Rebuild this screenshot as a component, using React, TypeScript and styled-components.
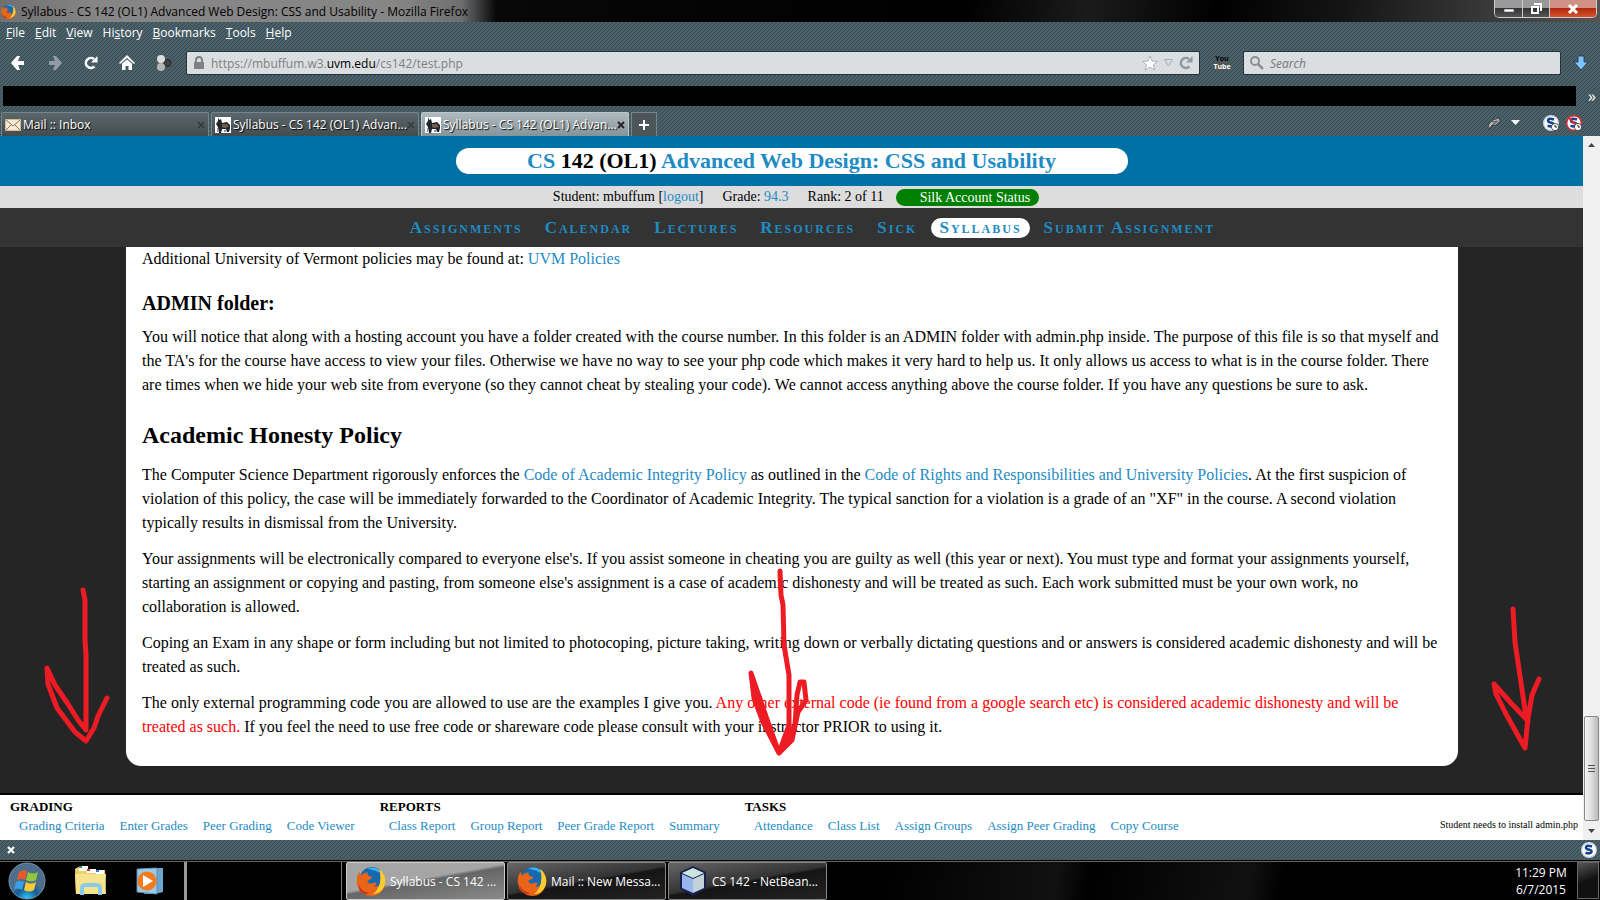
import React from "react";
import styled, { createGlobalStyle } from "styled-components";

const serif = `"Liberation Serif", "Times New Roman", serif`;
const sans = `"Open Sans", "Noto Sans", sans-serif`;
const hatch = `linear-gradient(135deg, #37494f 0 12.5%, #4a6169 12.5% 50%, #37494f 50% 62.5%, #4a6169 62.5%) 0 0 / 4px 4px`;
const paleHatch = `linear-gradient(135deg, #d3d8da 0 12.5%, #dce0e2 12.5% 50%, #d3d8da 50% 62.5%, #dce0e2 62.5%) 0 0 / 4px 4px`;

const Global = createGlobalStyle`
  *{box-sizing:border-box}
  body{margin:0;background:#000}
  button{border:0;padding:0;background:none;color:inherit;font:inherit}
  a{color:#1e8bc3;text-decoration:none}
`;
const Desktop = styled.div`min-height:100vh;display:flex;flex-direction:column;font-family:${sans};font-size:12px;`;

/* window title */
const TitleBar = styled.header`height:22px;display:flex;align-items:center;justify-content:space-between;background:linear-gradient(100deg,#111 0,#050505 40%,#000 60%,#1b1b1b 68%,#000 76%,#151515 84%,#555 100%);overflow:hidden;`;
const WindowTitle = styled.div`display:flex;align-items:center;gap:5px;height:22px;padding:0 28px 0 1px;color:#000;background:linear-gradient(90deg,#707070,#868686 20% 80%,#6f6f6f 93%,transparent);`;
const Caption = styled.div`display:flex;align-self:flex-start;height:18px;margin-right:3px;border:1px solid #ccc;border-top:0;border-radius:0 0 5px 5px;overflow:hidden;`;
const CaptionButton = styled.button<{ $close?: boolean }>`width:${p => (p.$close ? 47 : 27)}px;display:flex;align-items:center;justify-content:center;background:${p => (p.$close ? "linear-gradient(#cf9183 0 45%,#b32b0e 50%,#d4532d)" : "linear-gradient(#999 0 45%,#333 50%,#555)")};& + &{border-left:1px solid #ccc;}`;

/* browser chrome */
const Chrome = styled.div`background:${hatch};color:#fff;`;
const MenuBar = styled.nav`height:20px;display:flex;align-items:center;gap:10px;padding-left:6px;text-shadow:1px 1px 1px #000;`;
const ToolBar = styled.div`height:42px;display:flex;align-items:center;`;
const NavButtons = styled.div`display:flex;width:186px;gap:21px;align-items:center;padding-left:10px;`;
const IconButton = styled.button`display:flex;align-items:center;justify-content:center;`;
const Field = styled.label`height:24px;display:flex;align-items:center;gap:6px;padding:0 6px;background:${paleHatch};border:1px solid #26343a;border-radius:2px;color:#808080;`;
const UrlField = styled(Field)`flex:1;`;
const SearchField = styled(Field)`width:318px;`;
const UrlText = styled.span`flex:1;b{font-weight:400;color:#000}`;
const SearchInput = styled.input`flex:1;min-width:0;border:0;padding:0;background:transparent;font:italic 12px ${sans};outline:0;&::placeholder{color:#777;opacity:1}`;
const ToolbarSlot = styled.div<{ $last?: boolean }>`width:${p => (p.$last ? 39 : 43)}px;display:flex;justify-content:center;`;
const BookmarkRow = styled.div`display:flex;align-items:center;height:24px;padding:0 0 0 3px;`;
const BookmarkStrip = styled.div`flex:1;height:20px;background:#000;`;
const More = styled.button`width:24px;padding-left:8px;line-height:12px;font-size:16px;`;
const TabRow = styled.div`height:28px;display:flex;align-items:flex-end;gap:2px;padding-left:1px;`;
const Tab = styled.button<{ $active?: boolean }>`width:208px;height:24px;display:flex;align-items:center;gap:2px;padding:0 3px;color:#fff;text-shadow:1px 1px 1px #000;border:1px solid ${p => (p.$active ? "#bcc8cc" : "#77868c")};border-bottom:0;border-radius:2px 2px 0 0;background:${p => (p.$active ? "linear-gradient(#aebabf,#84949a)" : "linear-gradient(#5b676c,#434c50)")};svg{flex:none}`;
const TabLabel = styled.span`flex:1;min-width:0;text-align:left;white-space:nowrap;`;
const NewTab = styled.button`width:26px;height:24px;display:flex;align-items:center;justify-content:center;background:#4c555a;border:1px solid #77868c;border-bottom:0;`;
const TabTools = styled.div`margin-left:auto;display:flex;align-items:center;height:26px;gap:7px;padding-right:18px;`;

/* page */
const Viewport = styled.div`flex:1;display:flex;`;
const Page = styled.div`flex:1;min-width:0;display:flex;flex-direction:column;background:#252525;font-family:${serif};font-size:16px;color:#000;`;
const Banner = styled.header`height:50px;display:flex;align-items:center;justify-content:center;background:#0071a4;`;
const CourseTitle = styled.h1`margin:0;width:672px;height:26px;border-radius:13px;background:#fff;text-align:center;font-size:22px;line-height:26px;color:#1e8bc3;b{color:#000}`;
const StatusRow = styled.div`height:22px;display:flex;align-items:center;justify-content:center;gap:19px;background:#ddd;font-size:14px;padding-left:9px;`;
const Silk = styled.span`height:17px;line-height:17px;margin-left:-7px;padding:0 9px 0 24px;border-radius:9px;background:green;color:#fff;`;
const SiteNav = styled.nav`height:39px;display:flex;align-items:center;justify-content:center;gap:6px;padding-left:42px;background:#333;`;
const NavLink = styled.a<{ $current?: boolean }>`height:20px;line-height:20px;padding:0 8px;border-radius:10px;font-size:17px;font-weight:700;font-variant:small-caps;letter-spacing:2px;background:${p => (p.$current ? "#fff" : "transparent")};`;
const Card = styled.main`margin:0 125px 27px 126px;padding:0 16px 15px;background:#fff;border-radius:0 0 15px 15px;`;
const Para = styled.p`margin:0 0 12px;line-height:24px;`;
const SubHeading = styled.h3`margin:20px 0 10px;font-size:20px;line-height:24px;`;
const Heading = styled.h2`margin:22px 0 12px;font-size:24px;line-height:32px;`;
const Warning = styled.span`color:#f00;`;
const Footer = styled.footer`margin-top:auto;height:47px;display:flex;border-top:2px solid #000;background:#fff;padding:0 5px 0 10px;font-size:13px;`;
const FooterGroup = styled.section`margin-right:25px;`;
const FooterTitle = styled.h4`margin:2px 0 0;font-size:13px;line-height:19px;`;
const FooterLinks = styled.div`display:flex;gap:15px;padding-left:9px;line-height:19px;`;
const FooterNote = styled.span`margin-left:auto;align-self:flex-end;padding-bottom:10px;font-size:10px;`;
const Scrollbar = styled.div`width:17px;display:flex;flex-direction:column;align-items:center;background:#f0f0f0;padding:7px 0;`;
const Thumb = styled.div`width:15px;height:105px;margin:auto 0 8px;border:1px solid #888;border-radius:2px;background:linear-gradient(90deg,#f5f5f5,#ddd 50%,#bbb);display:flex;align-items:center;justify-content:center;`;

/* bottom bars */
const AddonBar = styled.div`height:20px;display:flex;align-items:center;justify-content:space-between;padding:0 3px 0 7px;background:${hatch};`;
const TaskBar = styled.footer`height:40px;display:flex;align-items:stretch;border-top:1px solid #000;background:linear-gradient(100deg,#000 0 55%,#111 66%,#000 68%,#111 78%,#000 80%);color:#fff;box-shadow:inset 0 1px #666;`;
const Pinned = styled.div`width:184px;display:flex;align-items:center;gap:28px;padding-left:8px;`;
const BlankTask = styled.div`width:158px;margin:1px 4px 0 0;border-left:3px solid #999;border-right:1px solid #777;background:#000;`;
const Task = styled.button<{ $active?: boolean }>`width:159px;height:38px;margin:1px 2px 0 0;display:flex;align-items:center;gap:4px;padding-left:9px;border:1px solid ${p => (p.$active ? "#ccc" : "#888")};border-radius:2px;background:${p => (p.$active ? "linear-gradient(170deg,#a5a5a5 0 45%,#666 50%,#8a8a8a)" : "linear-gradient(170deg,#666 0,#333 48%,#151515 52%,#222)")};`;
const Clock = styled.div`margin-left:auto;width:72px;text-align:center;line-height:17px;padding-top:3px;`;
const ShowDesktop = styled.button`width:22px;margin:1px 1px 1px 0;border:1px solid #666;background:linear-gradient(160deg,#555,#111 50%);`;

/* pen marks drawn over the page */
const Ink = styled.svg`position:absolute;pointer-events:none;fill:none;stroke:#ed1c24;stroke-width:5;stroke-linejoin:round;stroke-linecap:round;`;
const LeftInk = styled(Ink)`left:40px;top:580px;`;
const MidInk = styled(Ink)`left:calc(50% - 60px);top:560px;`;
const RightInk = styled(Ink)`right:50px;top:600px;`;

const Firefox = ({ s }: { s: number }) => (
  <svg width={s} height={s} viewBox="0 0 32 32">
    <circle cx="17" cy="14" r="13" fill="#1668b0" /><path d="M12 3Q20-1 27 6Q24 8 21 5Q17 4 12 3" fill="#3cb4e8" />
    <path d="M25 4Q34 13 30 22Q26 32 16 32Q3 31 1 19Q0 10 4 6L5 10Q9 6 13 7Q11 9 14 11Q18 11 17 13L12 16Q13 20 18 18Q21 17 22 19Q17 24 24 21Q29 16 25 4" fill="#ea6518" />
    <path d="M25 3Q35 13 29 24Q25 30 18 30Q29 22 25 3" fill="#ffcb2d" /><path d="M2 19Q5 27 14 29Q9 32 4 26" fill="#c9341a" />
  </svg>
);
const Donkey = () => (
  <svg width="16" height="16" viewBox="0 0 16 16"><path fill="#fff" d="M0 0h16v16H0z" /><path fill="#20242c" d="M3 0l1 3 2-1 1 4 5-1 3 3v3l-1 4h-2l-1-3H7l-1 4H4L3 10 1 7 3 4z" /><path fill="#765b49" d="M7 7h5l2 3-5 1-2-1z" /><path fill="#8795b8" d="M2 11h1v4H2zM9 13h2v2H9z" /></svg>
);
const TabClose = ({ dark }: { dark?: boolean }) => (
  <svg width="8" height="8" viewBox="0 0 8 8"><path d="M1 1l6 6M7 1L1 7" stroke={dark ? "#222" : "#2f3538"} strokeWidth={dark ? 1.8 : 1.4} /></svg>
);
const Reload = ({ c }: { c: string }) => (
  <svg width="14" height="14" viewBox="0 0 14 14"><path d="M10.5 10.5A5 5 0 1 1 10 3" fill="none" stroke={c} strokeWidth="2.6" /><path d="M13.5 0v6.5H7z" fill={c} /></svg>
);
const SBadge = ({ red, clock = true }: { red?: boolean; clock?: boolean }) => (
  <svg width="16" height="16" viewBox="0 0 16 16"><circle cx="8" cy="8" r="7.3" fill="#fff" stroke={red ? "#e02a33" : "#cdd6e4"} strokeWidth="1.4" /><path d="M11 4.5Q5 2.6 5 5.3Q5 7.4 8.3 7.8Q11 8.3 10.5 10Q9.5 12.2 4.5 10.8" fill="none" stroke="#17428e" strokeWidth="2.6" />{red && <path d="M3 3l10 10" stroke="#e02a33" strokeWidth="2" />}{clock && <g><circle cx="12" cy="12" r="3.6" fill="#fff" stroke="#222" strokeWidth=".7" /><path d="M12 9.8V12h2" stroke="#222" fill="none" /></g>}</svg>
);

const menus = [["", "F", "ile"], ["", "E", "dit"], ["", "V", "iew"], ["Hi", "s", "tory"], ["", "B", "ookmarks"], ["", "T", "ools"], ["", "H", "elp"]];
const nav = ["Assignments", "Calendar", "Lectures", "Resources", "Sick", "Syllabus", "Submit Assignment"];
const groups: [string, string[]][] = [
  ["GRADING", ["Grading Criteria", "Enter Grades", "Peer Grading", "Code Viewer"]],
  ["REPORTS", ["Class Report", "Group Report", "Peer Grade Report", "Summary"]],
  ["TASKS", ["Attendance", "Class List", "Assign Groups", "Assign Peer Grading", "Copy Course"]],
];

export default function App() {
  return (
    <Desktop>
      <Global />
      <TitleBar>
        <WindowTitle><Firefox s={15} />Syllabus - CS 142 (OL1) Advanced Web Design: CSS and Usability - Mozilla Firefox</WindowTitle>
        <Caption>
          <CaptionButton aria-label="Minimize"><svg width="12" height="10"><path d="M1 5h10v3H1z" fill="#fff" stroke="#445" strokeWidth=".6" /></svg></CaptionButton>
          <CaptionButton aria-label="Restore"><svg width="12" height="12"><path d="M4 1h7v7M2 4h6v6H2z" fill="none" stroke="#fff" strokeWidth="2" /></svg></CaptionButton>
          <CaptionButton $close aria-label="Close"><svg width="12" height="10"><path d="M2 1l8 8M10 1L2 9" stroke="#fff" strokeWidth="3" /></svg></CaptionButton>
        </Caption>
      </TitleBar>
      <Chrome>
        <MenuBar>{menus.map(([a, u, b]) => <button key={u}>{a}<u>{u}</u>{b}</button>)}</MenuBar>
        <ToolBar>
          <NavButtons>
            <IconButton aria-label="Back"><svg width="16" height="16" viewBox="0 0 16 16"><path d="M1 8L7 1h3L8 6h6v4H8l2 5H7z" fill="#fff" /></svg></IconButton>
            <IconButton aria-label="Forward"><svg width="16" height="16" viewBox="0 0 16 16"><path d="M15 8L9 1H6l2 5H2v4h6l-2 5h3z" fill="#909da2" /></svg></IconButton>
            <IconButton aria-label="Reload"><Reload c="#fff" /></IconButton>
            <IconButton aria-label="Home"><svg width="16" height="16" viewBox="0 0 16 16"><path d="M8 0l8 8-1 1-7-6-7 6-1-1z M3 8.500l5-4 5 4V15H9.500v-4h-3v4H3z" fill="#fff" /></svg></IconButton>
            <IconButton aria-label="Extension"><svg width="16" height="16" viewBox="0 0 16 16"><circle cx="11.500" cy="8" r="3.500" fill="#444" stroke="#222" /><circle cx="5" cy="4" r="4" fill="#ddd" /><circle cx="5" cy="12" r="4" fill="#b5b5b5" /></svg></IconButton>
          </NavButtons>
          <UrlField as="div">
            <svg width="12" height="14" viewBox="0 0 12 14"><path d="M1 6h10v7H1z" fill="#808080" /><path d="M3 7V4a3 3 0 0 1 6 0v3" fill="none" stroke="#808080" strokeWidth="2" /></svg>
            <UrlText>https://mbuffum.w3.<b>uvm.edu</b>/cs142/test.php</UrlText>
            <svg width="16" height="16" viewBox="0 0 16 16"><path d="M8 1l2 5 5.500.4-4.200 3.500L12.800 15 8 12.200 3.200 15l1.500-5.100L.5 6.400 6 6z" fill="#fff" stroke="#a0a5a8" strokeWidth=".8" /></svg>
            <svg width="9" height="8"><path d="M.5.5h8L4.500 7z" fill="none" stroke="#a4b0b8" /></svg>
            <Reload c="#8c9ba5" />
          </UrlField>
          <ToolbarSlot><svg width="18" height="18" viewBox="0 0 18 18"><rect x="1" y="8" width="16" height="9" rx="2" fill="#555" /><text x="9" y="7" textAnchor="middle" fontSize="7" fontWeight="700">You</text><text x="9" y="15" textAnchor="middle" fontSize="7" fontWeight="700" fill="#fff">Tube</text></svg></ToolbarSlot>
          <SearchField>
            <svg width="14" height="14" viewBox="0 0 14 14"><circle cx="5" cy="5" r="4" fill="none" stroke="#8c9092" strokeWidth="2" /><path d="M8 8l5 5" stroke="#8c9092" strokeWidth="2.500" /></svg>
            <SearchInput aria-label="Search" placeholder="Search" />
          </SearchField>
          <ToolbarSlot $last><svg width="16" height="16" viewBox="0 0 16 16"><path d="M5 1h6v6h4l-7 8-7-8h4z" fill="#7cc4ff" stroke="#234" strokeWidth=".8" /></svg></ToolbarSlot>
        </ToolBar>
        <BookmarkRow><BookmarkStrip /><More aria-label="More bookmarks">»</More></BookmarkRow>
        <TabRow>
          <Tab><svg width="16" height="12" viewBox="0 0 16 12"><path d="M.5.5h15v11H.5z" fill="#f5ead5" stroke="#d8b98e" /><path d="M1 1l7 6 7-6M1 11l5-5M15 11l-5-5" fill="none" stroke="#8a7660" /></svg><TabLabel>Mail :: Inbox</TabLabel><TabClose /></Tab>
          <Tab><Donkey /><TabLabel>Syllabus - CS 142 (OL1) Advan...</TabLabel><TabClose /></Tab>
          <Tab $active><Donkey /><TabLabel>Syllabus - CS 142 (OL1) Advan...</TabLabel><TabClose dark /></Tab>
          <NewTab aria-label="New tab"><svg width="12" height="12"><path d="M6 1v10M1 6h10" stroke="#fff" strokeWidth="2" /></svg></NewTab>
          <TabTools>
            <svg width="14" height="12" viewBox="0 0 14 12"><path d="M1 11L2 7Q5 2 12 1l1 3-4 4-4 0-2 3z" fill="#bbb" stroke="#333" strokeWidth=".8" /><path d="M5 5l6-1M6 7l4-2" stroke="#333" strokeWidth=".8" /></svg>
            <svg width="28" height="6"><path d="M3 0h9L7.500 5z" fill="#fff" /></svg>
            <SBadge /><SBadge red />
          </TabTools>
        </TabRow>
      </Chrome>
      <Viewport>
        <Page>
          <Banner><CourseTitle>CS <b>142 (OL1)</b> Advanced Web Design: CSS and Usability</CourseTitle></Banner>
          <StatusRow><span>Student: mbuffum [<a href="#logout">logout</a>]</span><span>Grade: <a href="#grade">94.3</a></span><span>Rank: 2 of 11</span><Silk>Silk Account Status</Silk></StatusRow>
          <SiteNav>{nav.map(n => <NavLink key={n} href="#nav" $current={n === "Syllabus"}>{n}</NavLink>)}</SiteNav>
          <Card>
            <Para>Additional University of Vermont policies may be found at: <a href="#uvm">UVM Policies</a></Para>
            <SubHeading>ADMIN folder:</SubHeading>
            <Para>You will notice that along with a hosting account you have a folder created with the course number. In this folder is an ADMIN folder with admin.php inside. The purpose of this file is so that myself and the TA's for the course have access to view your files. Otherwise we have no way to see your php code which makes it very hard to help us. It only allows us access to what is in the course folder. There are times when we hide your web site from everyone (so they cannot cheat by stealing your code). We cannot access anything above the course folder. If you have any questions be sure to ask.</Para>
            <Heading>Academic Honesty Policy</Heading>
            <Para>The Computer Science Department rigorously enforces the <a href="#integrity">Code of Academic Integrity Policy</a> as outlined in the <a href="#rights">Code of Rights and Responsibilities and University Policies</a>. At the first suspicion of violation of this policy, the case will be immediately forwarded to the Coordinator of Academic Integrity. The typical sanction for a violation is a grade of an "XF" in the course. A second violation typically results in dismissal from the University.</Para>
            <Para>Your assignments will be electronically compared to everyone else's. If you assist someone in cheating you are guilty as well (this year or next). You must type and format your assignments yourself, starting an assignment or copying and pasting, from someone else's assignment is a case of academic dishonesty and will be treated as such. Each work submitted must be your own work, no collaboration is allowed.</Para>
            <Para>Coping an Exam in any shape or form including but not limited to photocoping, picture taking, writing down or verbally dictating questions and or answers is considered academic dishonesty and will be treated as such.</Para>
            <Para>The only external programming code you are allowed to use are the examples I give you. <Warning>Any other external code (ie found from a google search etc) is considered academic dishonesty and will be treated as such.</Warning> If you feel the need to use free code or shareware code please consult with your instructor PRIOR to using it.</Para>
          </Card>
          <Footer>
            {groups.map(([t, links]) => <FooterGroup key={t}><FooterTitle>{t}</FooterTitle><FooterLinks>{links.map(l => <a key={l} href="#tool">{l}</a>)}</FooterLinks></FooterGroup>)}
            <FooterNote>Student needs to install admin.php</FooterNote>
          </Footer>
        </Page>
        <Scrollbar>
          <svg width="7" height="4"><path d="M0 4h7L3.500 0z" fill="#444" /></svg>
          <Thumb><svg width="7" height="8"><path d="M0 .5h7M0 3.500h7M0 6.500h7" stroke="#555" /></svg></Thumb>
          <svg width="7" height="4"><path d="M0 0h7L3.500 4z" fill="#444" /></svg>
        </Scrollbar>
      </Viewport>
      <AddonBar><IconButton aria-label="Close bar"><svg width="8" height="8"><path d="M1 1l6 6M7 1L1 7" stroke="#fff" strokeWidth="2.200" /></svg></IconButton><SBadge clock={false} /></AddonBar>
      <TaskBar>
        <Pinned>
          <svg width="38" height="38" viewBox="0 0 38 38"><defs><radialGradient id="orb" cy="1"><stop stopColor="#29d4ff" /><stop offset=".6" stopColor="#175b95" /><stop offset="1" stopColor="#4d6f8c" /></radialGradient></defs><circle cx="19" cy="19" r="18" fill="url(#orb)" stroke="#7894a8" /><path d="M11 10q4-3 8-1l-2 9q-4-2-8 0z" fill="#e8582b" /><path d="M20 10q5 3 10 0l-2 8q-5 3-10 0z" fill="#93c83d" /><path d="M8 20q5-2 8 0l-2 8q-4-3-8 0z" fill="#3ba0e6" /><path d="M18 20q5 3 10 0l-2 8q-5 3-10 0z" fill="#fcca36" /></svg>
          <svg width="34" height="32" viewBox="0 0 34 32"><path d="M1 4l3-2h8l2 3h17l1 24H2z" fill="#ead06c" /><path d="M5 1h9v5H5zM13 4h9v4h-9zM22 5h8v4h-8z" fill="#fff" /><path d="M5 1h3v2H5z" fill="#2a9d3a" /><path d="M13 4h3v2h-3z" fill="#d33" /><path d="M22 5h3v2h-3z" fill="#28c" /><path d="M1 9h31l-1 20H2z" fill="#f6e38e" /><path d="M8 30v-7q0-3 4-3h10q4 0 4 3v7" fill="none" stroke="#8acbe8" strokeWidth="4" /></svg>
          <svg width="28" height="28" viewBox="0 0 28 28"><path d="M8 1h19v24l-8 2H8z" fill="#6ca6cf" /><path d="M1 2l20-1v26L1 25z" fill="#9cc9e4" stroke="#568cb4" /><circle cx="11" cy="14" r="9.500" fill="#f47b1d" /><path d="M7 8l10 6-10 6z" fill="#fff" /></svg>
        </Pinned>
        <BlankTask />
        <Task $active><Firefox s={30} />Syllabus - CS 142 ...</Task>
        <Task><Firefox s={30} />Mail :: New Messa...</Task>
        <Task><svg width="30" height="32" viewBox="0 0 30 32"><path d="M15 1l13 6v17l-13 7-13-7V7z" fill="#18204e" /><path d="M15 3l11 5-11 5L4 8z" fill="#cbe5df" /><path d="M4 9l11 5v14L4 23z" fill="#98b7ee" /><path d="M26 9l-11 5v14l11-5z" fill="#c3d1d8" /></svg>CS 142 - NetBean...</Task>
        <Clock>11:29 PM<br />6/7/2015</Clock>
        <ShowDesktop aria-label="Show desktop" />
      </TaskBar>
      <LeftInk width="80" height="180"><path d="M43 10L45 20 45 60 46 75 46 150 38 140 28 124 15 105 7 88 8 104 17 128 35 152 46 161 54 148 58 136 67 118" /></LeftInk>
      <MidInk width="120" height="210"><path d="M40 11L41 35 43 45 44 85 49 115 49 165 39 193 29 165 11 113 14 138 23 162 39 193 55 165 57 135 60 122 64 122 66 140 58 152 52 180 39 193 22 150 13 120" /></MidInk>
      <RightInk width="100" height="180"><path d="M63 9L65 42 75 110 78 121 61 103 44 84 46 94 56 114 75 148 78 118 82 95 89 79" /></RightInk>
    </Desktop>
  );
}
